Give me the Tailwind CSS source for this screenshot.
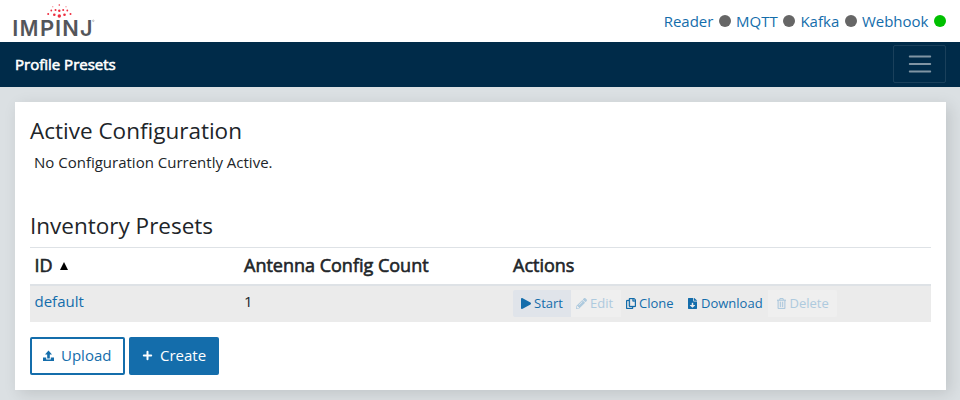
<!DOCTYPE html>
<html lang="en">
<head>
<meta charset="utf-8">
<title>Profile Presets</title>
<script src="https://cdn.jsdelivr.net/npm/@tailwindcss/browser@4"></script>
</head>
<body class="h-[400px] overflow-hidden bg-[#dbe0e3] font-['Open_Sans',sans-serif] text-[15px] leading-[22.5px] text-[#212529]">
<header class="flex h-[42px] items-center justify-between bg-white pr-[14px] pl-[13px]">
  <svg class="h-[42px] w-[84px]" viewBox="13 0 84 42" aria-label="Impinj">
    <g fill="#54565a" font-family="Inter" font-weight="600" font-size="22">
      <text x="12.2" y="36">I</text>
      <text x="19.8" y="36" textLength="18.6" lengthAdjust="spacingAndGlyphs">M</text>
      <text x="40" y="36">P</text>
      <text x="55" y="36">I</text>
      <text x="62.2" y="36" textLength="16.500" lengthAdjust="spacingAndGlyphs">N</text>
      <text x="80" y="36" textLength="12.500" lengthAdjust="spacingAndGlyphs">J</text>
    </g>
    <g fill="#ee2e3f">
      <circle cx="59.300" cy="16" r="1.700"/><circle cx="54.300" cy="14.700" r="1.300"/><circle cx="64.500" cy="14.700" r="1.300"/>
      <circle cx="59.300" cy="10.700" r="1.200"/><circle cx="55.500" cy="10" r="1"/><circle cx="63.200" cy="10" r="1"/>
      <circle cx="51.300" cy="10.500" r=".9"/><circle cx="67.300" cy="10.500" r=".9"/><circle cx="48.200" cy="14" r="1"/><circle cx="70.500" cy="14" r="1"/>
      <circle cx="59.300" cy="5" r=".8"/><circle cx="52.800" cy="6.800" r=".5"/><circle cx="66" cy="6.800" r=".5"/>
    </g>
    <circle cx="93.300" cy="20.800" r=".8" fill="none" stroke="#8a8b8e" stroke-width=".5"/>
  </svg>
  <nav class="flex items-center gap-[5.2px] text-[#146dab]">
    <a class="flex items-center gap-[5.5px]">Reader<i class="size-[12px] rounded-full bg-[#666]"></i></a>
    <a class="flex items-center gap-[5.5px]">MQTT<i class="size-[12px] rounded-full bg-[#666]"></i></a>
    <a class="flex items-center gap-[5.5px]">Kafka<i class="size-[12px] rounded-full bg-[#666]"></i></a>
    <a class="flex items-center gap-[5.5px]">Webhook<i class="size-[12px] rounded-full bg-[#00c000]"></i></a>
  </nav>
</header>
<div class="flex h-[45px] items-center justify-between bg-[#002b49] pr-[14px] pl-[15px]">
  <span class="-mt-[0.5px] text-white [-webkit-text-stroke:0.6px_white]">Profile Presets</span>
  <button class="-mt-px flex h-[38px] w-[53px] items-center justify-center rounded-[2px] border border-white/10" aria-label="Menu">
    <svg class="size-[28px]" viewBox="0 0 30 30"><path d="M4 7h22M4 15h22M4 23h22" stroke="#fff" stroke-opacity=".5" stroke-width="2" stroke-linecap="round"/></svg>
  </button>
</div>
<main class="mx-[15px] mt-[15px] mr-[14px] h-[288px] bg-white px-[15px] pt-[15px] shadow-[4px_4px_15px_rgba(0,0,0,0.12)]">
  <h2 class="text-[22.5px] leading-[27px]">Active Configuration</h2>
  <p class="mt-[7px] pl-[4px]">No Configuration Currently Active.</p>
  <h2 class="mt-[38px] text-[22.5px] leading-[27px]">Inventory Presets</h2>
  <div class="mt-[8px] grid h-[39px] grid-cols-[209.5px_269px_1fr] items-center border-t border-b-2 border-t-[#dee2e6] border-b-[#dee2e6] pl-[4.5px] text-[18px] [-webkit-text-stroke:0.6px_#212529]">
    <span class="flex items-center gap-[7px]">ID<svg class="h-[8px] w-[8px]" viewBox="0 0 8 8"><path d="M4 0L8 8H0z" fill="#000"/></svg></span>
    <span>Antenna Config Count</span>
    <span>Actions</span>
  </div>
  <div class="grid h-[36px] grid-cols-[209.5px_269px_1fr] items-center bg-[#ebebeb] pl-[4.5px]">
    <a class="-mt-[5px] text-[#146dab]">default</a>
    <span class="-mt-[5px]">1</span>
    <div class="flex h-[27px] text-[13px] text-[#146dab]">
      <a class="flex w-[58px] items-center gap-[3px] rounded-l-[2px] bg-[#e0e4ea] pl-[8px]"><svg class="h-[11px] w-[10px]" viewBox="0 0 448 512" preserveAspectRatio="none"><path fill="currentColor" d="M424.400 214.700L72.400 6.600C43.800-10.300 0 6.100 0 47.900V464c0 37.500 40.700 60.100 72.400 41.300l352-208c31.400-18.500 31.500-64.100 0-82.600z"/></svg>Start</a>
      <a class="flex w-[50px] items-center gap-[3px] bg-[#efefef] pl-[5px] text-[#aecade]"><svg class="size-[11px]" viewBox="0 0 512 512"><path fill="currentColor" d="M497.900 142.100l-46.100 46.100c-4.700 4.700-12.300 4.700-17 0l-111-111c-4.700-4.700-4.700-12.300 0-17l46.100-46.100c18.700-18.700 49.100-18.700 67.900 0l60.100 60.100c18.800 18.700 18.800 49.100 0 67.900zM284.200 99.800L21.600 362.400.400 483.900c-2.900 16.400 11.400 30.600 27.800 27.800l121.500-21.300 262.600-262.600c4.700-4.700 4.700-12.300 0-17l-111-111c-4.800-4.700-12.400-4.700-17.100 0zM124.100 339.900c-5.500-5.500-5.500-14.300 0-19.800l154-154c5.500-5.500 14.300-5.500 19.800 0s5.500 14.300 0 19.800l-154 154c-5.500 5.500-14.300 5.500-19.800 0zM88 424h48v36.300l-64.500 11.300-31.100-31.100L51.700 376H88v48z"/></svg>Edit</a>
      <a class="flex w-[61px] items-center gap-[3px] pl-[5px]"><svg class="h-[11px] w-[10px]" viewBox="0 0 448 512" preserveAspectRatio="none"><path fill="currentColor" stroke="currentColor" stroke-width="12" d="M433.941 65.941l-51.882-51.882A48 48 0 0 0 348.118 0H176c-26.510 0-48 21.490-48 48v48H48c-26.510 0-48 21.490-48 48v320c0 26.510 21.490 48 48 48h224c26.510 0 48-21.490 48-48v-48h80c26.510 0 48-21.490 48-48V99.882a48 48 0 0 0-14.059-33.941zM266 464H54a6 6 0 0 1-6-6V150a6 6 0 0 1 6-6h74v224c0 26.510 21.490 48 48 48h96v42a6 6 0 0 1-6 6zm128-96H182a6 6 0 0 1-6-6V54a6 6 0 0 1 6-6h106v88c0 13.255 10.745 24 24 24h88v202a6 6 0 0 1-6 6zm6-256h-64V48h9.632c1.591 0 3.117.632 4.243 1.757l48.368 48.368a6 6 0 0 1 1.757 4.243V112z"/></svg>Clone</a>
      <a class="flex w-[86px] items-center gap-[4px] pl-[6px]"><svg class="h-[11px] w-[9px]" viewBox="0 0 384 512" preserveAspectRatio="none"><path fill="currentColor" d="M224 136V0H24C10.700 0 0 10.700 0 24v464c0 13.300 10.700 24 24 24h336c13.300 0 24-10.700 24-24V160H248c-13.200 0-24-10.800-24-24zm76.450 211.360l-96.420 95.700c-6.650 6.610-17.390 6.610-24.040 0l-96.420-95.700C73.420 337.290 80.540 320 94.820 320H160v-80c0-8.840 7.160-16 16-16h32c8.840 0 16 7.160 16 16v80h65.180c14.280 0 21.400 17.290 11.270 27.360zM377 105L279.100 7c-4.500-4.500-10.600-7-17-7H256v128h128v-6.100c0-6.300-2.500-12.400-7-16.900z"/></svg>Download</a>
      <a class="flex w-[69px] items-center gap-[4px] rounded-r-[2px] bg-[#efefef] pl-[8.5px] text-[#aecade]"><svg class="h-[11px] w-[9px]" viewBox="0 0 448 512" preserveAspectRatio="none"><path fill="currentColor" stroke="currentColor" stroke-width="8" d="M268 416h24a12 12 0 0 0 12-12V188a12 12 0 0 0-12-12h-24a12 12 0 0 0-12 12v216a12 12 0 0 0 12 12zM432 80h-82.410l-34-56.700A48 48 0 0 0 274.410 0H173.590a48 48 0 0 0-41.160 23.300L98.410 80H16A16 16 0 0 0 0 96v16a16 16 0 0 0 16 16h16v336a48 48 0 0 0 48 48h288a48 48 0 0 0 48-48V128h16a16 16 0 0 0 16-16V96a16 16 0 0 0-16-16zM171.840 50.910A6 6 0 0 1 177 48h94a6 6 0 0 1 5.150 2.910L293.610 80H154.390zM368 464H80V128h288zm-212-48h24a12 12 0 0 0 12-12V188a12 12 0 0 0-12-12h-24a12 12 0 0 0-12 12v216a12 12 0 0 0 12 12z"/></svg>Delete</a>
    </div>
  </div>
  <div class="mt-[15px] flex gap-[4px]">
    <button class="flex h-[38px] w-[95px] items-center gap-[7px] rounded-[2px] border-2 border-[#146dab] pl-[11px] text-[#146dab]"><svg class="h-[12px] w-[11px]" viewBox="0 0 11 12"><path fill="currentColor" d="M5.500 .5L9 4.500H6.800V8.500H4.200V4.500H2zM0 7.500H3.200V9.500H7.800V7.500H11V11H0z"/></svg>Upload</button>
    <button class="flex h-[38px] w-[90px] items-center gap-[7px] rounded-[2px] bg-[#146dab] pl-[13px] text-white"><svg class="h-[11px] w-[11px]" viewBox="0 0 11 11"><path d="M5.500 1.800v7.400M1.800 5.500h7.400" stroke="currentColor" stroke-width="2" stroke-linecap="round"/></svg>Create</button>
  </div>
</main>
</body>
</html>
